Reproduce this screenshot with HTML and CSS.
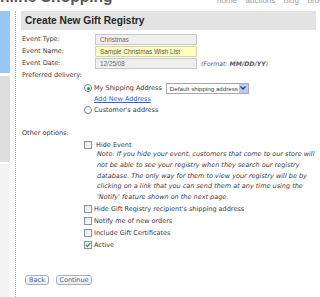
FILE: index.html
```html
<!DOCTYPE html>
<html>
<head>
<meta charset="utf-8">
<link rel="stylesheet" href="styles.css">
</head>
<body>
<header class="topbar">
  <div class="logo">nline Shopping</div>
  <nav class="nav"><span>home</span><span>auctions</span><span>blog</span><span>browse</span></nav>
</header>
<div class="main">
  <aside class="sidebar">
    <div class="blk blk-blue"></div>
    <div class="blk blk-gray"></div>
    <div class="blk blk-light"></div>
  </aside>
  <div class="divider"></div>
  <section class="content">
    <h1 class="title">Create New Gift Registry</h1>
    <div class="row">
      <label class="label">Event Type:</label>
      <input class="field" type="text" value="Christmas" readonly>
    </div>
    <div class="row">
      <label class="label">Event Name:</label>
      <input class="field field-hl" type="text" value="Sample Christmas Wish List" readonly>
    </div>
    <div class="row">
      <label class="label">Event Date:</label>
      <input class="field" type="text" value="12/25/08" readonly>
      <span class="format">(Format: <b>MM/DD/YY</b>)</span>
    </div>
    <div class="row">
      <span class="label wide">Preferred delivery:</span>
    </div>
    <div class="choices">
      <div class="opt opt-radio">
        <span class="radio checked"></span>
        <span class="opt-text">My Shipping Address</span>
        <div class="select">
          <span class="select-text">Default shipping address</span>
          <span class="select-btn"><svg width="6" height="4" viewBox="0 0 6 4"><path d="M0.5 0.5 L3 3 L5.5 0.5" fill="none" stroke="#1d3f8a" stroke-width="1.3"/></svg></span>
        </div>
      </div>
      <a class="link" href="#">Add New Address</a>
      <div class="opt opt-radio">
        <span class="radio"></span>
        <span class="opt-text">Customer's address</span>
      </div>
    </div>
    <div class="row row-other">
      <span class="label wide">Other options:</span>
    </div>
    <div class="options">
      <div class="opt opt-first">
        <span class="check"></span>
        <span class="opt-text">Hide Event</span>
      </div>
      <p class="note">Note: If you hide your event, customers that come to our store will<br>not be able to see your registry when they search our registry<br>database. The only way for them to view your registry will be by<br>clicking on a link that you can send them at any time using the<br>'Notify' feature shown on the next page.</p>
      <div class="opt">
        <span class="check"></span>
        <span class="opt-text">Hide Gift Registry recipient's shipping address</span>
      </div>
      <div class="opt">
        <span class="check"></span>
        <span class="opt-text">Notify me of new orders</span>
      </div>
      <div class="opt">
        <span class="check"></span>
        <span class="opt-text">Include Gift Certificates</span>
      </div>
      <div class="opt">
        <span class="check checked"><svg width="6" height="6" viewBox="0 0 6 6"><path d="M0.8 3 L2.4 4.6 L5.2 1.2" fill="none" stroke="#2f9e2f" stroke-width="1.3"/></svg></span>
        <span class="opt-text">Active</span>
      </div>
    </div>
    <div class="buttons">
      <button class="btn btn-back" type="button">Back</button>
      <button class="btn btn-continue" type="button">Continue</button>
    </div>
  </section>
</div>
</body>
</html>
```
FILE: styles.css
```css
html, body {
  margin: 0;
  padding: 0;
}
body {
  width: 320px;
  height: 297px;
  overflow: hidden;
  background: #ffffff;
  font-family: "DejaVu Sans", sans-serif;
  font-size: 6.5px;
  color: #3a3a3a;
}
.topbar {
  display: flex;
  height: 11px;
  overflow: hidden;
  white-space: nowrap;
}
.logo {
  flex-shrink: 0;
  width: 113px;
  margin-top: -11px;
  font: bold 15.6px/16px "Liberation Sans", sans-serif;
  color: #5a5a5a;
}
.nav {
  flex-shrink: 0;
  display: flex;
  gap: 8.5px;
  margin-left: 104px;
  margin-top: -3.5px;
  font: 8px/8px "Liberation Sans", sans-serif;
  color: #a0a0a0;
}
.main {
  display: flex;
  height: 286px;
}
.sidebar {
  width: 10px;
  display: flex;
  flex-direction: column;
}
.blk-blue {
  height: 62px;
  background: #96c6f3;
}
.blk-gray {
  height: 86px;
  margin-top: 3px;
  background: #dedede;
}
.blk-light {
  flex: 1;
  margin-top: 2px;
  background: #f3f3f3;
}
.divider {
  margin-left: 5px;
  border-left: 1px dotted #b4b4b4;
}
.content {
  margin-left: 5px;
  width: 295px;
}
.title {
  margin: 0;
  height: 19px;
  padding-left: 4px;
  background: #e3e3e3;
  font: bold 10.2px/19px "Liberation Sans", sans-serif;
  color: #262626;
}
.row {
  display: flex;
  align-items: center;
  height: 12px;
  white-space: nowrap;
}
.row:first-of-type {
  margin-top: 3px;
}
.title + .row {
  margin-top: 3px;
}
.label {
  width: 73px;
  padding-left: 1px;
  flex-shrink: 0;
}
.label.wide {
  width: auto;
}
.field {
  box-sizing: border-box;
  width: 102px;
  height: 11px;
  margin: 0;
  padding: 0 0 0 4px;
  border: 1px solid #c9c9c9;
  background: #efefef;
  font: 6.4px "Liberation Sans", sans-serif;
  color: #6a6a6a;
  outline: none;
}
.field-hl {
  background: #ffffc2;
  border-color: #d6d6a2;
  color: #555;
}
.format {
  margin-left: 4px;
  font-style: italic;
  font-size: 6.2px;
  color: #5a5a5a;
}
.choices {
  padding-left: 63px;
  padding-top: 1px;
}
.opt {
  display: flex;
  align-items: center;
  height: 12px;
  white-space: nowrap;
}
.opt-text {
  margin-left: 2px;
}
.radio {
  box-sizing: border-box;
  width: 8px;
  height: 8px;
  border: 1px solid #6f8196;
  border-radius: 50%;
  background: #fff;
  display: flex;
  align-items: center;
  justify-content: center;
}
.radio.checked::after {
  content: "";
  width: 3px;
  height: 3px;
  border-radius: 50%;
  background: #2f9e3a;
}
.select {
  display: flex;
  align-items: center;
  box-sizing: border-box;
  width: 83px;
  height: 11px;
  margin-left: 4px;
  border: 1px solid #a9a9a9;
  background: #fff;
}
.select-text {
  flex: 1;
  padding-left: 3px;
  font: 6.2px "Liberation Sans", sans-serif;
  color: #444;
}
.select-btn {
  width: 9px;
  height: 9px;
  background: #b9cff2;
  display: flex;
  align-items: center;
  justify-content: center;
}
.link {
  display: block;
  height: 10px;
  line-height: 10px;
  margin-left: 10px;
  color: #2a5fcc;
  text-decoration: underline;
}
.row-other {
  margin-top: 11px;
}
.options {
  padding-left: 63px;
  margin-top: 1px;
}
.opt-first {
  height: 9px;
}
.check {
  box-sizing: border-box;
  width: 8px;
  height: 8px;
  border: 1px solid #8595a6;
  background: linear-gradient(135deg, #e6e6e6, #ffffff);
  display: flex;
  align-items: center;
  justify-content: center;
}
.opt-first .opt-text {
  margin-left: 4px;
}
.note {
  margin: 0 0 0 13px;
  font-style: italic;
  line-height: 10.8px;
  white-space: nowrap;
  color: #3a3a3a;
}
.buttons {
  display: flex;
  gap: 7px;
  margin-top: 24px;
  padding-left: 4px;
}
.btn {
  box-sizing: border-box;
  height: 10px;
  padding: 0;
  border: 1px solid #a8afba;
  border-radius: 3px;
  background: linear-gradient(#ffffff, #e9ecf0);
  font: 6.5px "DejaVu Sans", sans-serif;
  color: #3d62a0;
  line-height: 8px;
}
.btn-back {
  width: 24px;
}
.btn-continue {
  width: 36px;
}
```
